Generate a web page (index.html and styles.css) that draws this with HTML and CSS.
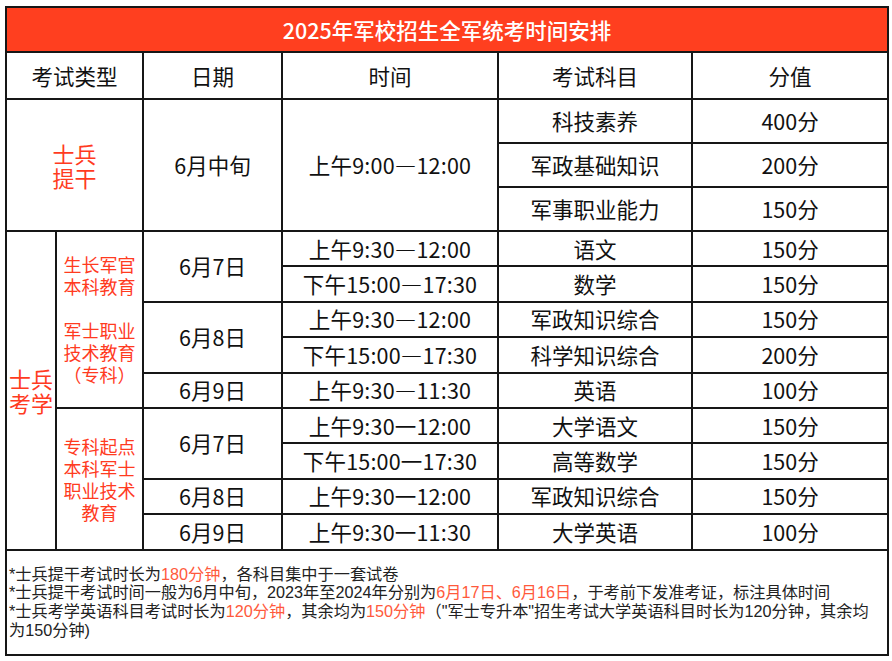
FILE: index.html
```html
<!DOCTYPE html>
<html lang="zh-CN">
<head>
<meta charset="utf-8">
<title>2025年军校招生全军统考时间安排</title>
<link rel="stylesheet" href="styles.css">
</head>
<body>
<div class="page">
<table class="schedule">
  <colgroup>
    <col class="c-type">
    <col class="c-sub">
    <col class="c-date">
    <col class="c-time">
    <col class="c-subject">
    <col class="c-score">
  </colgroup>
  <tr class="r-title"><td colspan="6" class="title">2025年军校招生全军统考时间安排</td></tr>
  <tr class="r-head">
    <td colspan="2" class="head">考试类型</td>
    <td class="head">日期</td>
    <td class="head">时间</td>
    <td class="head">考试科目</td>
    <td class="head">分值</td>
  </tr>
  <tr class="r-a">
    <td colspan="2" rowspan="3" class="cat cat-a">士兵<br>提干</td>
    <td rowspan="3">6月中旬</td>
    <td rowspan="3" class="time">上午9:00—12:00</td>
    <td>科技素养</td>
    <td>400分</td>
  </tr>
  <tr class="r-a"><td>军政基础知识</td><td>200分</td></tr>
  <tr class="r-a"><td>军事职业能力</td><td>150分</td></tr>
  <tr class="r-b">
    <td rowspan="9" class="cat cat-b">士兵<br>考学</td>
    <td rowspan="5" class="sub">生长军官<br>本科教育<br>&nbsp;<br>军士职业<br>技术教育<br>（专科）</td>
    <td rowspan="2">6月7日</td>
    <td class="time">上午9:30—12:00</td>
    <td>语文</td>
    <td>150分</td>
  </tr>
  <tr class="r-b"><td class="time">下午15:00—17:30</td><td>数学</td><td>150分</td></tr>
  <tr class="r-b">
    <td rowspan="2">6月8日</td>
    <td class="time">上午9:30—12:00</td>
    <td>军政知识综合</td>
    <td>150分</td>
  </tr>
  <tr class="r-b"><td class="time">下午15:00—17:30</td><td>科学知识综合</td><td>200分</td></tr>
  <tr class="r-b"><td>6月9日</td><td class="time">上午9:30—11:30</td><td>英语</td><td>100分</td></tr>
  <tr class="r-b">
    <td rowspan="4" class="sub">专科起点<br>本科军士<br>职业技术<br>教育</td>
    <td rowspan="2">6月7日</td>
    <td class="time">上午9:30一12:00</td>
    <td>大学语文</td>
    <td>150分</td>
  </tr>
  <tr class="r-b"><td class="time">下午15:00一17:30</td><td>高等数学</td><td>150分</td></tr>
  <tr class="r-b"><td>6月8日</td><td class="time">上午9:30一12:00</td><td>军政知识综合</td><td>150分</td></tr>
  <tr class="r-b"><td>6月9日</td><td class="time">上午9:30一11:30</td><td>大学英语</td><td>100分</td></tr>
  <tr class="r-foot">
    <td colspan="6" class="notes">
      <p>*士兵提干考试时长为<span class="hl">180分钟</span>，各科目集中于一套试卷</p>
      <p>*士兵提干考试时间一般为6月中旬，2023年至2024年分别为<span class="hl">6月17日、6月16日</span>，于考前下发准考证，标注具体时间</p>
      <p>*士兵考学英语科目考试时长为<span class="hl">120分钟</span>，其余均为<span class="hl">150分钟</span>（"军士专升本"招生考试大学英语科目时长为120分钟，其余均为150分钟)</p>
    </td>
  </tr>
</table>
</div>
</body>
</html>
```

FILE: styles.css
```css
html, body {
  margin: 0;
  padding: 0;
  background: #ffffff;
}

.page {
  padding: 6px 5px;
}

.schedule {
  width: 882px;
  border-collapse: collapse;
  table-layout: fixed;
  font-family: "Noto Sans CJK SC", "Noto Sans", sans-serif;
  color: #111111;
  font-size: 21.5px;
}

.c-type { width: 50px; }
.c-sub { width: 87px; }
.c-date { width: 139px; }
.c-time { width: 216px; }
.c-subject { width: 194px; }
.c-score { width: 196px; }

.schedule td {
  border: 2px solid #161616;
  text-align: center;
  vertical-align: middle;
  padding: 0;
  line-height: 24px;
}

.r-title { height: 45px; }
.r-head { height: 47px; }
.r-a { height: 44px; }
.r-b { height: 35.4px; }
.r-foot { height: 105px; }

.title {
  background: #ff3f1f;
  color: #ffffff;
  font-size: 21.5px;
  font-weight: 500;
}

.head {
  font-size: 21.5px;
}

.time {
  letter-spacing: 0.2px;
}

.cat {
  color: #ff3b1f;
  font-size: 22px;
}

.cat-a { line-height: 26px; }
.cat-b { line-height: 24px; }

.sub {
  color: #ff3b1f;
  font-size: 18px;
  line-height: 22px !important;
}

.notes {
  text-align: left !important;
  font-family: "Liberation Sans", "Noto Sans CJK SC", sans-serif;
  font-size: 16.2px;
  line-height: 18.7px !important;
  padding: 0 4px 0 2px !important;
  color: #222222;
}

.notes p {
  margin: 0;
}

.hl {
  color: #ff5a3c;
}
```
